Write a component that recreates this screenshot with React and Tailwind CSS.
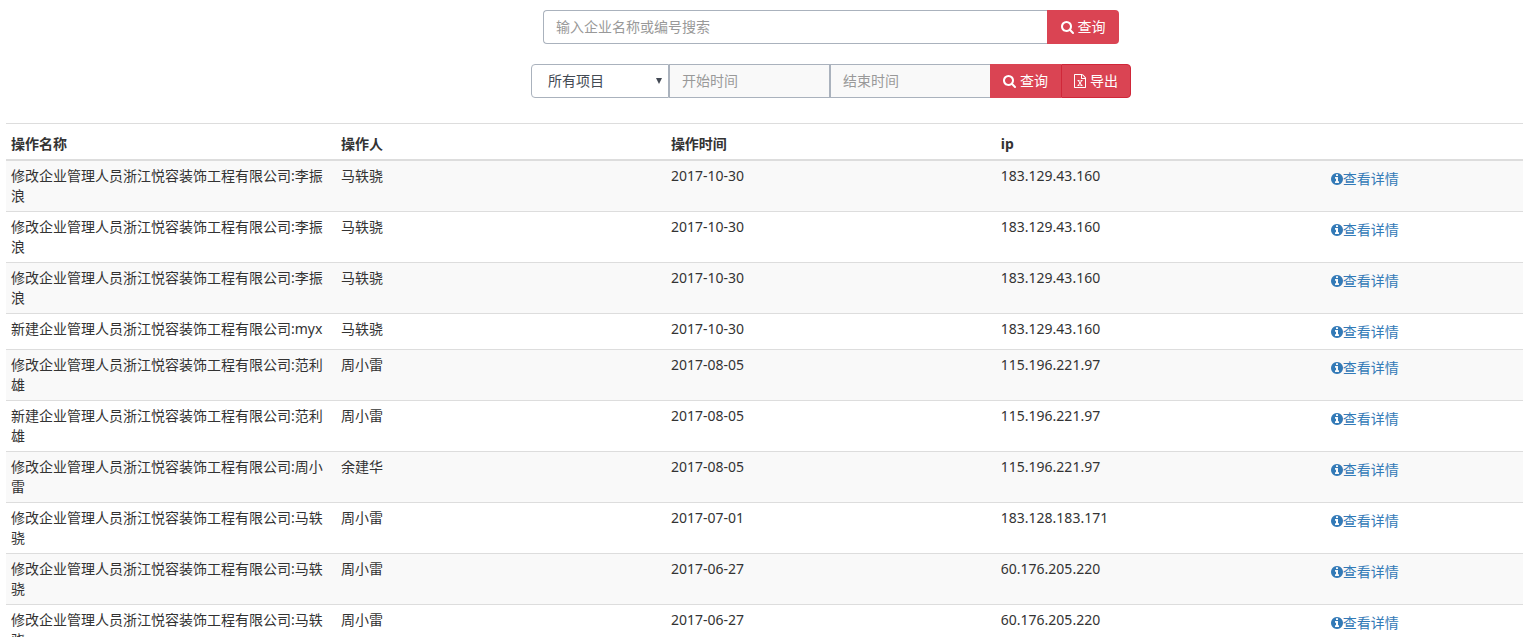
import React, { useState } from 'react';

const logs = [
  { id: 1, name: '修改企业管理人员浙江悦容装饰工程有限公司:李振浪', operator: '马轶骁', date: '2017-10-30', ip: '183.129.43.160' },
  { id: 2, name: '修改企业管理人员浙江悦容装饰工程有限公司:李振浪', operator: '马轶骁', date: '2017-10-30', ip: '183.129.43.160' },
  { id: 3, name: '修改企业管理人员浙江悦容装饰工程有限公司:李振浪', operator: '马轶骁', date: '2017-10-30', ip: '183.129.43.160' },
  { id: 4, name: '新建企业管理人员浙江悦容装饰工程有限公司:myx', operator: '马轶骁', date: '2017-10-30', ip: '183.129.43.160' },
  { id: 5, name: '修改企业管理人员浙江悦容装饰工程有限公司:范利雄', operator: '周小雷', date: '2017-08-05', ip: '115.196.221.97' },
  { id: 6, name: '新建企业管理人员浙江悦容装饰工程有限公司:范利雄', operator: '周小雷', date: '2017-08-05', ip: '115.196.221.97' },
  { id: 7, name: '修改企业管理人员浙江悦容装饰工程有限公司:周小雷', operator: '余建华', date: '2017-08-05', ip: '115.196.221.97' },
  { id: 8, name: '修改企业管理人员浙江悦容装饰工程有限公司:马轶骁', operator: '周小雷', date: '2017-07-01', ip: '183.128.183.171' },
  { id: 9, name: '修改企业管理人员浙江悦容装饰工程有限公司:马轶骁', operator: '周小雷', date: '2017-06-27', ip: '60.176.205.220' },
  { id: 10, name: '修改企业管理人员浙江悦容装饰工程有限公司:马轶骁', operator: '周小雷', date: '2017-06-27', ip: '60.176.205.220' },
];

function SearchIcon() {
  return (
    <svg viewBox="64 128 1664 1664" className="w-[13px] h-[13px] shrink-0 fill-current" aria-hidden="true">
      <path d="M1216 832q0-185-131.5-316.5t-316.5-131.5-316.5 131.5-131.5 316.5 131.5 316.5 316.5 131.5 316.5-131.5 131.5-316.5zm512 832q0 52-38 90t-90 38q-54 0-90-38l-343-342q-179 124-399 124-143 0-273.5-55.5t-225-150-150-225-55.5-273.5 55.5-273.5 150-225 225-150 273.5-55.5 273.5 55.5 225 150 150 225 55.5 273.5q0 220-124 399l343 343q37 37 37 90z" />
    </svg>
  );
}

function ExcelIcon() {
  return (
    <svg viewBox="128 0 1536 1792" className="w-3 h-3.5 shrink-0 fill-current" aria-hidden="true">
      <path d="M1596 380q28 28 48 76t20 88v1152q0 40-28 68t-68 28h-1344q-40 0-68-28t-28-68v-1600q0-40 28-68t68-28h896q40 0 88 20t76 48zm-444-244v376h376q-10-29-22-41l-313-313q-12-12-41-22zm384 1528v-1024h-416q-40 0-68-28t-28-68v-416h-768v1536h1280zm-979-234v106h281v-106h-75l103-161q5-7 10-16.5t7.5-13.5 3.5-4h2q1 4 5 10 2 4 4.5 7.5t6 8 6.5 8.5l107 161h-76v106h291v-106h-68l-192-273 195-282h67v-107h-279v107h74l-103 159q-4 7-10 16.5t-9 13.5l-2 3h-2q-1-4-5-10-6-11-17-23l-106-159h76v-107h-290v107h68l189 272-194 283h-68z" />
    </svg>
  );
}

function InfoIcon() {
  return (
    <svg viewBox="128 128 1536 1536" className="w-3 h-3 shrink-0 fill-current" aria-hidden="true">
      <path d="M1152 1376v-160q0-14-9-23t-23-9h-96v-512q0-14-9-23t-23-9h-320q-14 0-23 9t-9 23v160q0 14 9 23t23 9h96v320h-96q-14 0-23 9t-9 23v160q0 14 9 23t23 9h448q14 0 23-9t9-23zm-128-896v-160q0-14-9-23t-23-9h-192q-14 0-23 9t-9 23v160q0 14 9 23t23 9h192q14 0 23-9t9-23zm640 416q0 209-103 385.5t-279.5 279.5-385.5 103-385.5-103-279.5-279.5-103-385.5 103-385.5 279.5-279.5 385.5-103 385.5 103 279.5 279.5 103 385.5z" />
    </svg>
  );
}

function App() {
  const [keyword, setKeyword] = useState('');
  const [project, setProject] = useState('all');

  return (
    <div className="pt-2.5 pl-1.5 text-sm leading-5 text-[#333] bg-white font-['Noto_Sans','Noto_Sans_CJK_SC',sans-serif]">
      <div className="flex flex-col items-center gap-5 pl-[133px]">
        <form className="flex w-full max-w-[576px] h-[34px]" onSubmit={(e) => e.preventDefault()}>
          <input
            type="text"
            aria-label="企业名称或编号"
            placeholder="输入企业名称或编号搜索"
            value={keyword}
            onChange={(e) => setKeyword(e.target.value)}
            className="flex-1 min-w-0 px-3 border border-r-0 border-[#aab2bd] rounded-l placeholder:text-[#999]"
          />
          <button
            type="submit"
            className="flex items-center justify-center gap-1 w-[72px] rounded-r bg-[#da4453] text-white hover:bg-[#d32a3c]"
          >
            <SearchIcon />
            查询
          </button>
        </form>

        <form className="flex w-full max-w-[600px] h-[34px]" onSubmit={(e) => e.preventDefault()}>
          <div className="relative w-[138px] shrink-0">
            <select
              aria-label="项目"
              value={project}
              onChange={(e) => setProject(e.target.value)}
              className="w-full h-full pl-4 pr-5 appearance-none border border-[#aab2bd] rounded-l bg-white text-[#434a54]"
            >
              <option value="all">所有项目</option>
            </select>
            <svg viewBox="0 0 6 6" className="absolute right-[7px] top-3.5 w-1.5 h-1.5 fill-[#434a54] pointer-events-none" aria-hidden="true">
              <path d="M0 0h6L3 6z" />
            </svg>
          </div>
          <input
            type="text"
            readOnly
            aria-label="开始时间"
            placeholder="开始时间"
            className="flex-1 min-w-0 px-3 border border-[#aab2bd] bg-[#f9f9f9] placeholder:text-[#999]"
          />
          <input
            type="text"
            readOnly
            aria-label="结束时间"
            placeholder="结束时间"
            className="flex-1 min-w-0 px-3 border border-r-0 border-[#aab2bd] bg-[#f9f9f9] placeholder:text-[#999]"
          />
          <button
            type="submit"
            className="flex items-center justify-center gap-1 w-[71px] bg-[#da4453] text-white hover:bg-[#d32a3c]"
          >
            <SearchIcon />
            查询
          </button>
          <button
            type="button"
            className="flex items-center justify-center gap-1 w-[70px] rounded-r border border-[#d02739] bg-[#da4453] text-white hover:bg-[#d32a3c]"
          >
            <ExcelIcon />
            导出
          </button>
        </form>
      </div>

      <table className="w-full mt-[25px] table-fixed border-separate border-spacing-0 border-t border-[#ddd]">
        <thead>
          <tr className="text-left">
            <th className="w-[21.75%] px-[5px] pt-2.5 pb-[5px] border-b-2 border-[#ddd] font-bold">操作名称</th>
            <th className="w-[21.75%] px-[5px] pt-2.5 pb-[5px] border-b-2 border-[#ddd] font-bold">操作人</th>
            <th className="w-[21.75%] px-[5px] pt-2.5 pb-[5px] border-b-2 border-[#ddd] font-bold">操作时间</th>
            <th className="w-[21.75%] px-[5px] pt-2.5 pb-[5px] border-b-2 border-[#ddd] font-bold">ip</th>
            <th className="border-b-2 border-[#ddd]"></th>
          </tr>
        </thead>
        <tbody>
          {logs.map((log) => (
            <tr key={log.id} className="align-top odd:bg-[#f9f9f9]">
              <td className="p-[5px] border-b border-[#ddd]">{log.name}</td>
              <td className="p-[5px] border-b border-[#ddd]">{log.operator}</td>
              <td className="p-[5px] border-b border-[#ddd]">{log.date}</td>
              <td className="p-[5px] border-b border-[#ddd]">{log.ip}</td>
              <td className="p-[5px] border-b border-[#ddd]">
                <a href={`#log-${log.id}`} className="flex items-center w-fit h-[25px] text-[#337ab7] hover:text-[#23527c]">
                  <InfoIcon />
                  查看详情
                </a>
              </td>
            </tr>
          ))}
        </tbody>
      </table>
    </div>
  );
}

export default App;
